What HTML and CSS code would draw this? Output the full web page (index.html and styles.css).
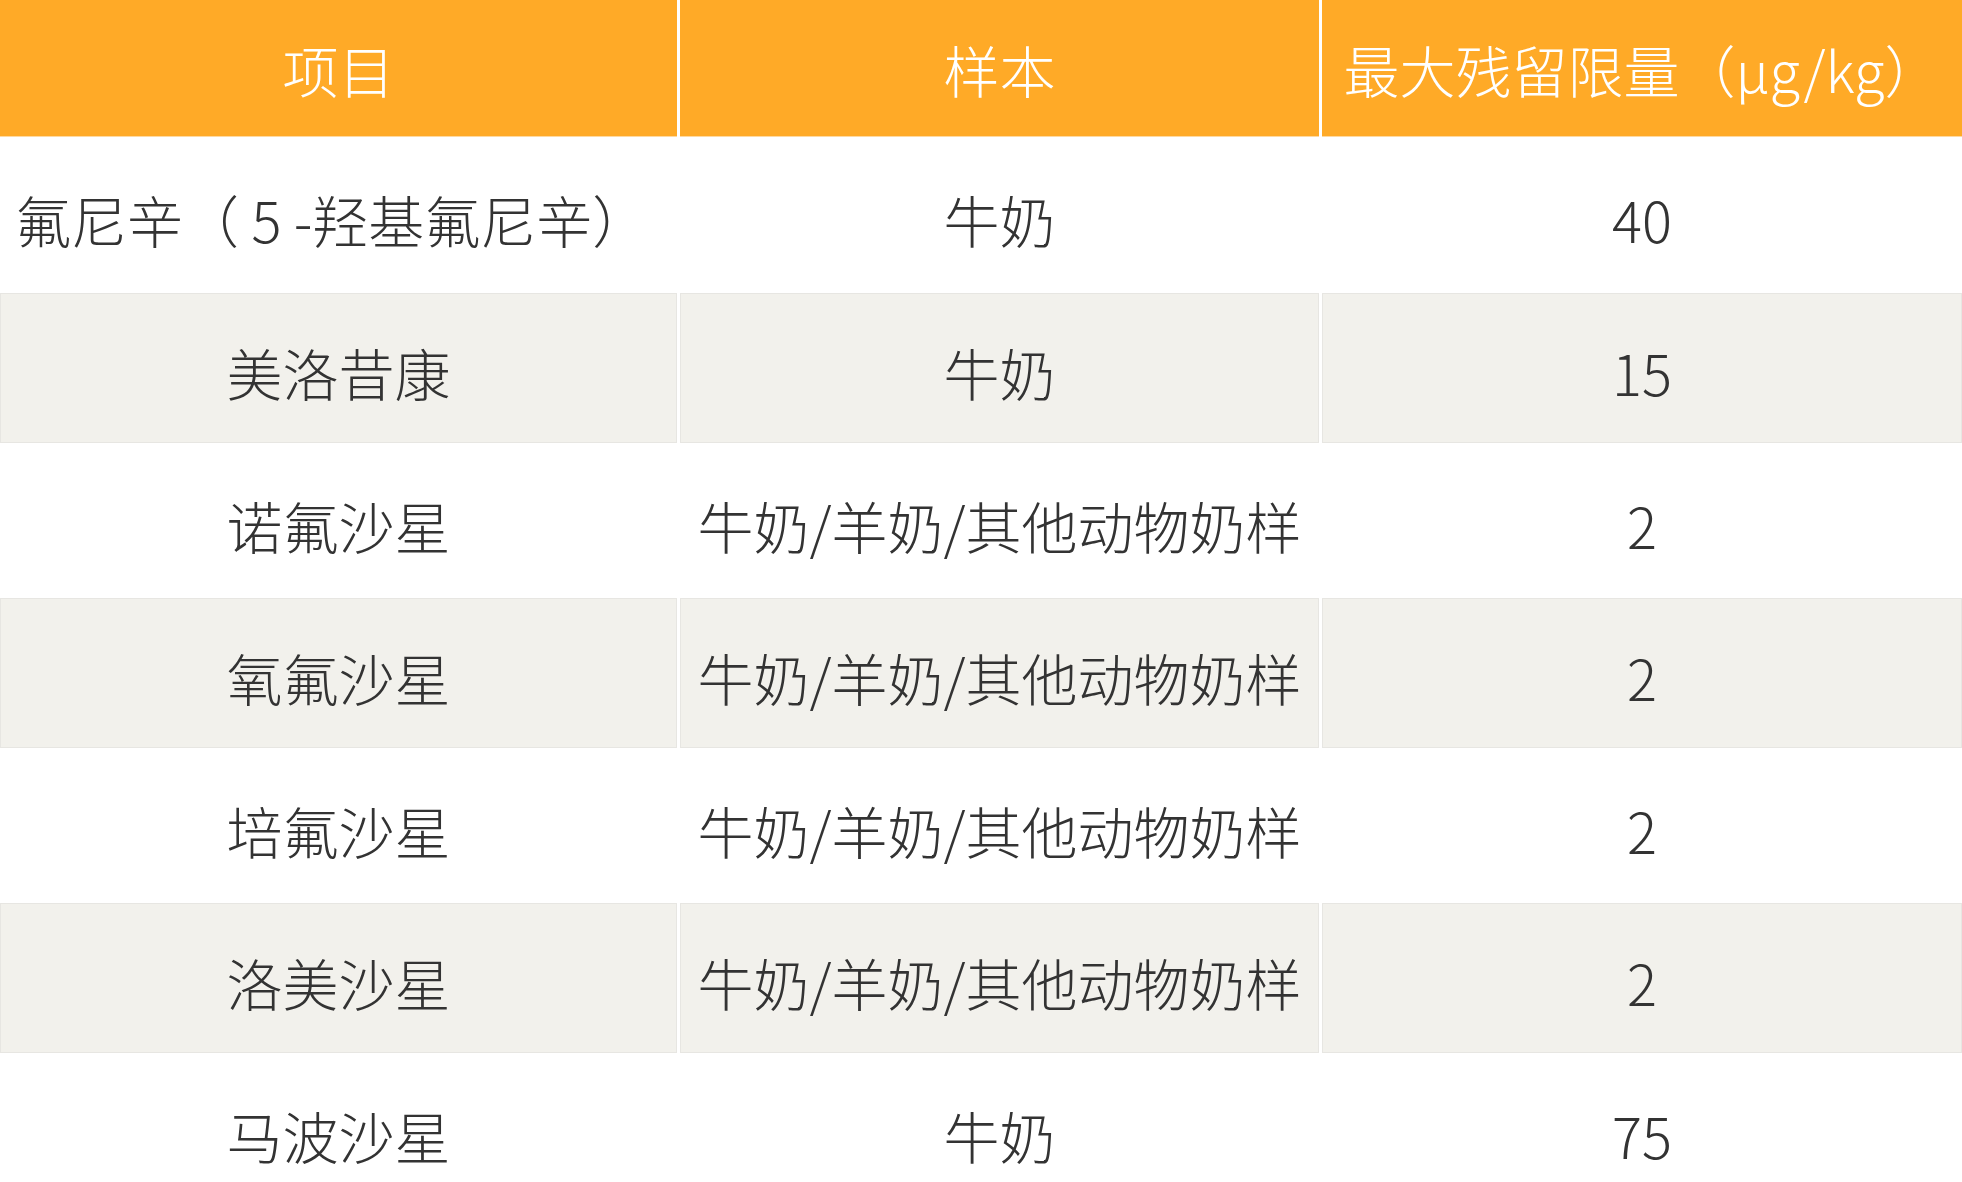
FILE: index.html
```html
<!DOCTYPE html>
<html lang="zh-CN">
<head>
<meta charset="utf-8">
<title>最大残留限量</title>
<link rel="stylesheet" href="styles.css">
</head>
<body>
<div class="table">
  <div class="row head">
    <div class="cell">项目</div>
    <div class="cell">样本</div>
    <div class="cell">最大残留限量（μg/kg）</div>
  </div>
  <div class="row odd first">
    <div class="cell left">氟尼辛（ 5 -羟基氟尼辛）</div>
    <div class="cell">牛奶</div>
    <div class="cell">40</div>
  </div>
  <div class="row even">
    <div class="cell">美洛昔康</div>
    <div class="cell">牛奶</div>
    <div class="cell">15</div>
  </div>
  <div class="row odd">
    <div class="cell">诺氟沙星</div>
    <div class="cell">牛奶/羊奶/其他动物奶样</div>
    <div class="cell">2</div>
  </div>
  <div class="row even">
    <div class="cell">氧氟沙星</div>
    <div class="cell">牛奶/羊奶/其他动物奶样</div>
    <div class="cell">2</div>
  </div>
  <div class="row odd">
    <div class="cell">培氟沙星</div>
    <div class="cell">牛奶/羊奶/其他动物奶样</div>
    <div class="cell">2</div>
  </div>
  <div class="row even">
    <div class="cell">洛美沙星</div>
    <div class="cell">牛奶/羊奶/其他动物奶样</div>
    <div class="cell">2</div>
  </div>
  <div class="row odd last">
    <div class="cell">马波沙星</div>
    <div class="cell">牛奶</div>
    <div class="cell">75</div>
  </div>
</div>
</body>
</html>
```
FILE: styles.css
```css
html, body {
  margin: 0;
  padding: 0;
  background: #ffffff;
}
body {
  font-family: "Noto Sans CJK SC", "Noto Sans", sans-serif;
  font-weight: 300;
  color: #333333;
  overflow: hidden;
}
.table {
  display: flex;
  flex-direction: column;
  width: 1962px;
}
.row {
  display: grid;
  grid-template-columns: 677px 639px 1fr;
  column-gap: 3px;
  height: 155px;
}
.cell {
  display: flex;
  align-items: center;
  justify-content: center;
  font-size: 56px;
  line-height: 1;
  white-space: pre;
  padding-top: 8px;
  box-sizing: border-box;
}
.cell.left {
  justify-content: flex-start;
  padding-left: 15px;
}
.head {
  height: 137px;
}
.head .cell {
  background: #ffaa27;
  color: #ffffff;
  padding-top: 2px;
  border-bottom: 1px solid #ffd9a0;
}
.first {
  height: 156px;
}
.even {
  height: 150px;
}
.even .cell {
  background: #f2f1ec;
  border: 1px solid #e7e6e2;
}
.last {
  height: 180px;
  align-items: start;
}
.last .cell {
  height: 155px;
}
```
